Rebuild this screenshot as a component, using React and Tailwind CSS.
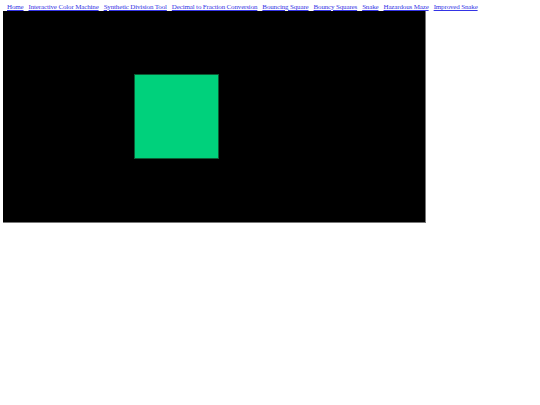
const links = [
  'Home',
  'Interactive Color Machine',
  'Synthetic Division Tool',
  'Decimal to Fraction Conversion',
  'Bouncing Square',
  'Bouncy Squares',
  'Snake',
  'Hazardous Maze',
  'Improved Snake',
];

export default function App() {
  return (
    <div className="bg-white min-h-[405px] px-[3px] font-['Liberation_Serif',serif]">
      <nav className="flex gap-[5px] pl-[4px] pt-[3px] h-[11px] text-[7px] tracking-[-0.15px] leading-[8px]">
        {links.map((l) => (
          <a key={l} href="#" className="text-[#3434e6] underline whitespace-nowrap">
            {l}
          </a>
        ))}
      </nav>
      <div className="w-[423px] h-[212px] bg-black border-r border-b border-[#777] pl-[131px] pt-[63px]">
        <div className="w-[85px] h-[85px] bg-[#00d17c] border border-[#0b5a33]" />
      </div>
    </div>
  );
}
